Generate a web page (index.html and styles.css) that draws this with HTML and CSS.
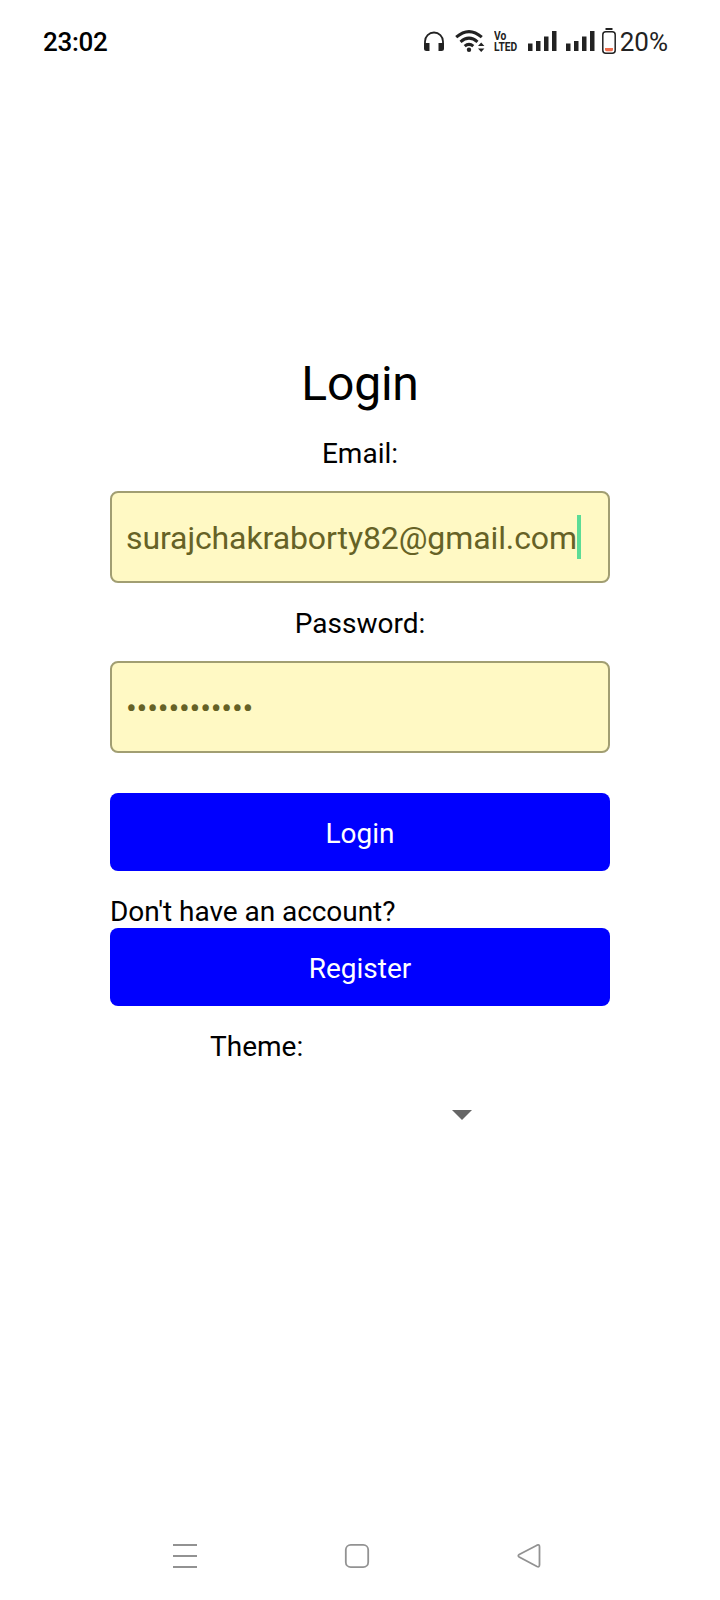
FILE: index.html
```html
<!DOCTYPE html>
<html lang="en">
<head>
<meta charset="utf-8">
<title>Login</title>
<link rel="stylesheet" href="styles.css">
</head>
<body>
<div class="screen">
  <header class="status">
    <span class="clock">23:02</span>
    <div class="indicators">
      <svg class="headset" width="22" height="22" viewBox="0 0 22 22"><path d="M2 15V10.500a9 9 0 0 1 18 0V15" fill="none" stroke="#222" stroke-width="1.800"/><path d="M1 12h5.500v8H3.500Q1 20 1 17.500zM15.500 12H21v5.500Q21 20 18.500 20h-3z" fill="#222"/></svg>
      <svg class="wifi" width="30" height="24" viewBox="0 0 30 24"><g fill="none" stroke="#222" stroke-width="3"><path d="M1.200 8.200Q14 -3 26.800 8.200M5.500 12.800Q14 5.500 22.500 12.800M9.700 17.200Q14 13.500 18.300 17.200"/></g><circle cx="14" cy="20.700" r="2.200" fill="#222"/><path d="M23 17l3.200-3.500L29.400 17zM23 19.500h6.400L26.200 23z" fill="#222"/></svg>
      <div class="volte"><span>Vo</span><span>LTED</span></div>
      <svg class="signal" width="29" height="20" viewBox="0 0 29 20"><path d="M0 12.500h4.500V20H0zM8 10h4.500v10H8zM16 5.500h4.500V20H16zM24 0h4.500v20H24z" fill="#222"/></svg>
      <svg class="signal signal-two" width="29" height="20" viewBox="0 0 29 20"><path d="M0 12.500h4.500V20H0zM8 10h4.500v10H8zM16 5.500h4.500V20H16zM24 0h4.500v20H24z" fill="#222"/></svg>
      <svg class="battery" width="14" height="26" viewBox="0 0 14 26"><path d="M3.500 1h7" stroke="#222" stroke-width="2"/><rect x=".8" y="3.800" width="12.400" height="21.400" rx="3" fill="none" stroke="#222" stroke-width="1.500"/><path d="M3 20h8v1.800Q11 23.200 9.500 23.200h-5Q3 23.200 3 21.800z" fill="#ee6c4d"/></svg>
      <span class="percent">20%</span>
    </div>
  </header>
  <main class="form">
    <h1 class="title">Login</h1>
    <div class="label label-email">Email:</div>
    <div class="field"><span class="email">surajchakraborty82@gmail.com</span><i class="caret"></i></div>
    <div class="label label-password">Password:</div>
    <div class="field"><span class="dots">••••••••••••</span></div>
    <div class="button button-login">Login</div>
    <div class="prompt">Don't have an account?</div>
    <div class="button button-register">Register</div>
    <div class="theme">
      <div class="theme-label">Theme:</div>
      <svg class="arrow" width="20" height="10" viewBox="0 0 20 10"><path d="M0 0h20L10 10z" fill="#666"/></svg>
    </div>
  </main>
  <nav class="nav">
    <svg width="24" height="26" viewBox="0 0 24 26"><path d="M0 2h24M0 13h24M0 24h24" stroke="#929292" stroke-width="2"/></svg>
    <svg width="26" height="26" viewBox="0 0 26 26"><rect x="1.800" y="1.800" width="22.400" height="22.400" rx="5" fill="none" stroke="#929292" stroke-width="1.800"/></svg>
    <svg width="24" height="26" viewBox="0 0 24 26"><path d="M2.200 11.500L20 2.200Q22.500 1.200 22.500 3.800v18Q22.500 24.500 20 23.500L2.200 14Q.4 12.700 2.200 11.500z" fill="none" stroke="#929292" stroke-width="1.800"/></svg>
  </nav>
</div>
</body>
</html>
```
FILE: styles.css
```css
* { box-sizing: border-box; }
body { margin: 0; background: #fff; font-family: Roboto, "Liberation Sans", sans-serif; color: #000; }
svg { display: block; flex: none; }
.screen { width: 720px; height: 1600px; display: flex; flex-direction: column; background: #fff; }
.status { height: 84px; display: flex; justify-content: space-between; padding: 27px 52px 0 43px; }
.clock { font-size: 26px; line-height: 31px; font-weight: 500; letter-spacing: -0.3px; }
.indicators { display: flex; align-items: flex-start; }
.headset { margin-top: 4px; margin-right: 10px; }
.wifi { margin-top: 2px; margin-right: 9px; }
.volte { display: flex; flex-direction: column; width: 24px; margin: 3px 10px 0 0; font-size: 12.5px; line-height: 11px; font-weight: 700; color: #222; transform: scaleX(0.82); transform-origin: left; }
.signal { margin-top: 4px; }
.signal-two { margin-left: 9px; }
.battery { margin: 1px 4px 0 7px; }
.percent { font-size: 26px; line-height: 31px; color: #222; }
.form { width: 500px; margin: 272px auto 0; display: flex; flex-direction: column; flex: 1; }
.title { margin: 0; font-size: 48px; line-height: 56px; font-weight: 400; text-align: center; letter-spacing: -0.2px; }
.label { font-size: 28px; line-height: 40px; text-align: center; }
.label-email { margin: 22px 0 17px; }
.label-password { margin: 21px 0 17px; }
.field { height: 92px; border: 2px solid #a19e72; border-radius: 8px; background: #fff9c4; padding: 0 14px; display: flex; align-items: center; color: #666226; font-size: 32px; line-height: 44px; }
.email { letter-spacing: -0.1px; padding-top: 2px; }
.caret { width: 4px; height: 44px; background: #5cdc96; }
.dots { letter-spacing: -0.2px; padding-top: 2px; }
.button { height: 78px; border-radius: 8px; background: #00f; color: #fff; font-size: 28px; line-height: 82px; text-align: center; }
.button-login { margin-top: 40px; }
.prompt { margin-top: 24px; font-size: 28px; line-height: 33px; letter-spacing: -0.05px; }
.theme { width: 300px; margin: 21px auto 0; }
.theme-label { font-size: 28px; line-height: 40px; }
.arrow { margin: 43px 0 0 242px; }
.nav { height: 57px; padding: 0 179px 0 172.5px; display: flex; justify-content: space-between; align-items: flex-start; }
```
